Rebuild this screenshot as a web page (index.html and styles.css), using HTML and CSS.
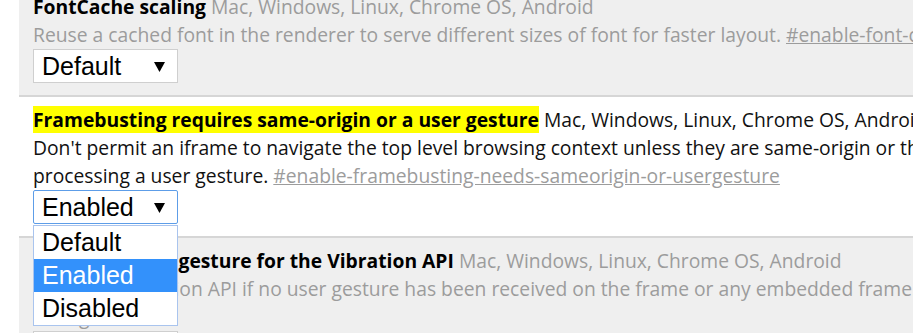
FILE: index.html
```html
<!DOCTYPE html>
<html lang="en">
<head>
    <meta charset="UTF-8">
    <meta name="viewport" content="width=device-width, initial-scale=1.0">
    <title>Experiments</title>
    <link rel="stylesheet" href="styles.css">
</head>
<body>
    <div class="experiments">
        <div class="experiment default">
            <div class="line">
                <span class="name">FontCache scaling</span>
                <span class="platforms">Mac, Windows, Linux, Chrome OS, Android</span>
            </div>
            <div class="desc">
                Reuse a cached font in the renderer to serve different sizes of font for faster layout.
                <a class="permalink" href="#enable-font-cache-scaling">#enable-font-cache-scaling</a>
            </div>
            <div class="select">
                <span>Default</span>
                <svg class="arrow" width="11" height="11" viewBox="0 0 11 11"><polygon points="0,1 11,1 5.5,11" fill="#000"/></svg>
            </div>
        </div>

        <div class="experiment enabled">
            <div class="line">
                <span class="name hilite">Framebusting requires same-origin or a user gesture</span>
                <span class="platforms">Mac, Windows, Linux, Chrome OS, Android</span>
            </div>
            <div class="desc">
                Don't permit an iframe to navigate the top level browsing context unless they are same-origin or the iframe is<br>
                processing a user gesture.
                <a class="permalink" href="#enable-framebusting-needs-sameorigin-or-usergesture">#enable-framebusting-needs-sameorigin-or-usergesture</a>
            </div>
            <div class="select-wrap">
                <div class="select focused">
                    <span>Enabled</span>
                    <svg class="arrow" width="11" height="11" viewBox="0 0 11 11"><polygon points="0,1 11,1 5.5,11" fill="#000"/></svg>
                </div>
                <div class="dropdown">
                    <div class="option">Default</div>
                    <div class="option selected">Enabled</div>
                    <div class="option">Disabled</div>
                </div>
            </div>
        </div>

        <div class="experiment default">
            <div class="line">
                <span class="name">Requiring user gesture for the Vibration API</span>
                <span class="platforms">Mac, Windows, Linux, Chrome OS, Android</span>
            </div>
            <div class="desc">
                Block the Vibration API if no user gesture has been received on the frame or any embedded frame.
                <a class="permalink" href="#enable-vibrate-requires-user-gesture">#enable-vibrate-requires-user-gesture</a>
            </div>
            <div class="select">
                <span>Default</span>
                <svg class="arrow" width="11" height="11" viewBox="0 0 11 11"><polygon points="0,1 11,1 5.5,11" fill="#000"/></svg>
            </div>
        </div>
    </div>
</body>
</html>
```

FILE: styles.css
```css
body {
    margin: 0;
    background-color: white;
    font-family: "Open Sans", "Noto Sans", sans-serif;
    font-size: 19.3px;
    color: #111;
    overflow: hidden;
}
.experiments {
    margin-left: 19px;
    margin-top: -16px;
    width: 894px;
    overflow: hidden;
}
.experiment {
    width: 1137px;
    padding: 9px 14px 12px 14px;
    border-bottom: 2px solid #d6d6d6;
    line-height: 28px;
}
.experiment.default {
    background-color: #efefef;
}
.experiment.default .platforms,
.experiment.default .desc {
    color: #9c9c9c;
}
.name {
    font-weight: bold;
    color: #000;
}
.hilite {
    background-color: #ffff00;
}
.platforms {
    color: #111;
}
.permalink {
    color: #9c9c9c;
    text-decoration: underline;
}
.select-wrap {
    position: relative;
    width: 145px;
}
.select {
    box-sizing: border-box;
    width: 145px;
    height: 34px;
    display: flex;
    align-items: center;
    justify-content: space-between;
    padding: 0 12px 0 8px;
    background-color: white;
    border: 1px solid #cfcfcf;
    font-family: "Liberation Sans", Arial, sans-serif;
    font-size: 25px;
    color: #000;
}
.select.focused {
    border-color: #5d9de8;
    border-radius: 2px;
}
.arrow {
    display: block;
}
.dropdown {
    position: absolute;
    left: 0;
    top: 35px;
    width: 145px;
    box-sizing: border-box;
    border: 1px solid #a9c4ee;
    background-color: white;
    font-family: "Liberation Sans", Arial, sans-serif;
    font-size: 25px;
    color: #000;
    z-index: 2;
}
.option {
    height: 33px;
    line-height: 33px;
    padding-left: 8px;
}
.option.selected {
    background-color: #3391fb;
    color: white;
}
```
